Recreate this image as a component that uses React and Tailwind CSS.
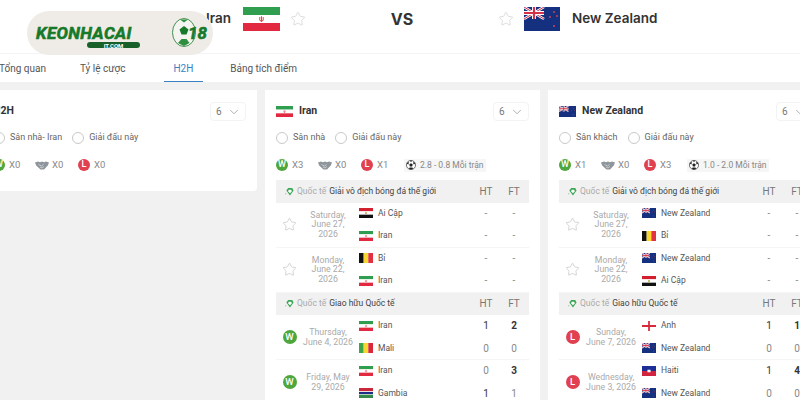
import { ChevronDown, Star } from 'lucide-react';

function IranFlag({ className }) {
  return (
    <svg viewBox="0 0 37 24" preserveAspectRatio="none" className={className}>
      <rect width="37" height="8" fill="#2f9e4f" />
      <rect y="8" width="37" height="8" fill="#fff" />
      <rect y="16" width="37" height="8" fill="#e2293f" />
      <path d="M18.5 9.2v5.6M16.8 10v3.4q1.7 1.6 3.4 0V10" fill="none" stroke="#d33" strokeWidth="0.9" />
    </svg>
  );
}

function NzFlag({ className }) {
  return (
    <svg viewBox="0 0 36 24" preserveAspectRatio="none" className={className}>
      <rect width="36" height="24" fill="#14307f" />
      <path d="M0 0L20 12M20 0L0 12" stroke="#fff" strokeWidth="2.6" />
      <path d="M0 0L20 12M20 0L0 12" stroke="#d3324a" strokeWidth="1" />
      <path d="M10 0v12M0 6h20" stroke="#fff" strokeWidth="4" />
      <path d="M10 0v12M0 6h20" stroke="#d3324a" strokeWidth="2.2" />
      <circle cx="30" cy="5" r="1" fill="#c9405a" />
      <circle cx="26" cy="10" r="1" fill="#c9405a" />
      <circle cx="33" cy="9" r="1" fill="#c9405a" />
      <circle cx="30" cy="19" r="1.1" fill="#c9405a" />
    </svg>
  );
}

function EgyptFlag({ className }) {
  return (
    <svg viewBox="0 0 36 24" preserveAspectRatio="none" className={className}>
      <rect width="36" height="8" fill="#d3202f" />
      <rect y="8" width="36" height="8" fill="#fff" />
      <rect y="16" width="36" height="8" fill="#111" />
      <rect x="16" y="10" width="4" height="4" fill="#b8962e" />
    </svg>
  );
}

function BelgiumFlag({ className }) {
  return (
    <svg viewBox="0 0 36 24" preserveAspectRatio="none" className={className}>
      <rect width="12" height="24" fill="#111" />
      <rect x="12" width="12" height="24" fill="#f7d730" />
      <rect x="24" width="12" height="24" fill="#e2323f" />
    </svg>
  );
}

function MaliFlag({ className }) {
  return (
    <svg viewBox="0 0 36 24" preserveAspectRatio="none" className={className}>
      <rect width="12" height="24" fill="#3fa648" />
      <rect x="12" width="12" height="24" fill="#f7d730" />
      <rect x="24" width="12" height="24" fill="#d8283a" />
    </svg>
  );
}

function GambiaFlag({ className }) {
  return (
    <svg viewBox="0 0 36 24" preserveAspectRatio="none" className={className}>
      <rect width="36" height="8" fill="#c8283a" />
      <rect y="8" width="36" height="8" fill="#fff" />
      <rect y="9.5" width="36" height="5" fill="#1c2f86" />
      <rect y="16" width="36" height="8" fill="#35894a" />
    </svg>
  );
}

function EnglandFlag({ className }) {
  return (
    <svg viewBox="0 0 36 24" preserveAspectRatio="none" className={className}>
      <rect width="36" height="24" fill="#fff" />
      <path d="M18 0v24M0 12h36" stroke="#d8283a" strokeWidth="4.5" />
    </svg>
  );
}

function HaitiFlag({ className }) {
  return (
    <svg viewBox="0 0 36 24" preserveAspectRatio="none" className={className}>
      <rect width="36" height="12" fill="#1c2f96" />
      <rect y="12" width="36" height="12" fill="#d2233f" />
      <rect x="14" y="9" width="8" height="6" fill="#fff" />
    </svg>
  );
}

const FLAGS = {
  iran: IranFlag,
  nz: NzFlag,
  egypt: EgyptFlag,
  belgium: BelgiumFlag,
  mali: MaliFlag,
  gambia: GambiaFlag,
  england: EnglandFlag,
  haiti: HaitiFlag,
};

function Ball({ className }) {
  return (
    <svg viewBox="0 0 24 24" className={className}>
      <circle cx="12" cy="12" r="11" fill="#fff" stroke="#222" strokeWidth="1.5" />
      <path d="M12 7.5l4.2 3-1.6 5H9.4l-1.6-5z" fill="#222" />
      <path d="M9 1.500h6L12 4.500zM22 9l-3.500 1.500-1.500-4 2-2.500zM2 9l3.500 1.500 1.500-4-2-2.500zM7 21l1.500-3h7L17 21l-5 1.500z" fill="#222" />
    </svg>
  );
}

function Handshake() {
  return (
    <svg viewBox="0 0 14 9" className="h-[9px] w-[14px]">
      <path d="M0 1.5l3-1 2 .8L7 .5l2 .8 2-.8 3 1-1.2 3L9 8.5H5.5L1.2 4.5z" fill="#8f959c" />
      <path d="M3.5 3.5l3 1.5 2-1.5M5 6l2 1 2-1.5" fill="none" stroke="#dfe1e3" strokeWidth="0.7" />
    </svg>
  );
}

function LeagueIcon() {
  return (
    <svg viewBox="0 0 10 10" className="h-[9px] w-[9px] shrink-0">
      <path d="M1.500 4l2-3h4.500l1.500 3L5.500 9.500z" fill="#3aa655" />
      <path d="M4 3h3l.5 2-2 2-2-2z" fill="#fff" />
      <circle cx="0.800" cy="7.500" r="0.700" fill="#9ccf9f" />
    </svg>
  );
}

function ResultBadge({ result, size }) {
  const color = result === 'W' ? 'bg-[#4ea73c]' : 'bg-[#e0404f]';
  const dims = size === 'lg' ? 'h-[14px] w-[14px] text-[9.500px]' : 'h-3 w-3 text-[9px]';
  return (
    <span className={`flex shrink-0 items-center justify-center rounded-full font-medium text-white ${color} ${dims}`}>
      {result}
    </span>
  );
}

function Radio({ label }) {
  return (
    <div className="flex items-center gap-[5px]">
      <span className="h-3 w-3 rounded-full border border-[#c9c9c9] bg-white" />
      <span className="text-[9px] text-[#666]">{label}</span>
    </div>
  );
}

function Stats({ wins, draws, losses, goals }) {
  return (
    <div className="mt-[14px] flex h-[12px] items-center text-[9.500px] text-[#888]">
      <ResultBadge result="W" />
      <span className="ml-1 w-[26px]">{wins}</span>
      <Handshake />
      <span className="ml-[3px] w-[26px]">{draws}</span>
      <ResultBadge result="L" />
      <span className="ml-1 w-[27px]">{losses}</span>
      {goals && (
        <div className="flex h-[13px] w-[82px] items-center gap-[4px] bg-[#f6f6f6] pl-[2px] text-[8.500px]">
          <Ball className="h-[10px] w-[10px] shrink-0" />
          <span className="whitespace-nowrap">{goals}</span>
        </div>
      )}
    </div>
  );
}

function PanelHead({ flag, title, radios }) {
  const Flag = FLAGS[flag];
  return (
    <>
      <div className="flex h-[19px] items-center justify-between">
        <div className="flex items-center gap-[6px]">
          {Flag && <Flag className="h-[11px] w-[17px]" />}
          <span className="-mt-px text-[10.500px] font-bold text-[#333]">{title}</span>
        </div>
        <div className="flex h-[19px] w-[36px] items-center justify-between rounded-sm border border-[#f3f3f3] pr-[4px] pl-[5px] text-[10px] text-[#777]">
          6
          <ChevronDown size={14} strokeWidth={1} className="text-[#777]" />
        </div>
      </div>
      <div className="mt-[10px] flex h-[14px] items-center gap-[10px]">
        {radios.map((r) => (
          <Radio key={r} label={r} />
        ))}
      </div>
    </>
  );
}

function TableHead({ league }) {
  return (
    <div className="flex h-[22.500px] items-center bg-[#f1f1f1] text-[8.500px]">
      <div className="ml-[9px] flex w-[187px] items-center gap-[3px] whitespace-nowrap">
        <LeagueIcon />
        <span className="text-[#aaa]">Quốc tế</span>
        <span className="text-[#444]">{league}</span>
      </div>
      <span className="w-[28px] text-center text-[10px] text-[#777]">HT</span>
      <span className="w-[28px] text-center text-[10px] text-[#777]">FT</span>
    </div>
  );
}

function Score({ value, strong, bold }) {
  const tone = bold ? 'font-bold text-[#333]' : strong ? 'text-[#333]' : 'text-[#888]';
  return <span className={`w-[28px] text-center text-[10px] ${tone}`}>{value}</span>;
}

function TeamLine({ team }) {
  const Flag = FLAGS[team.flag];
  return (
    <div className="flex h-[22.500px] items-center">
      <div className="flex w-[113px] items-center gap-[5px] whitespace-nowrap">
        <Flag className="h-[10px] w-[14px] shrink-0" />
        <span className="text-[8.500px] text-[#555]">{team.name}</span>
      </div>
      <Score value={team.ht} strong={team.htWin} />
      <Score value={team.ft} bold={team.ftWin} strong={team.ftWin} />
    </div>
  );
}

function MatchRow({ match }) {
  return (
    <div className="flex h-[45px] items-center border-b border-[#f5f5f5]">
      <div className="flex w-[27px] justify-center">
        {match.result ? (
          <ResultBadge result={match.result} size="lg" />
        ) : (
          <Star size={15} strokeWidth={1} className="text-[#bbb]" />
        )}
      </div>
      <div className="w-[50px] pt-px text-center text-[8.750px] leading-[9.500px] text-[#aaa]">
        {match.date.map((d) => (
          <div key={d} className="whitespace-nowrap">
            {d}
          </div>
        ))}
      </div>
      <div className="ml-[6px]">
        <TeamLine team={match.teams[0]} />
        <TeamLine team={match.teams[1]} />
      </div>
    </div>
  );
}

const t = (name, flag, ht = '-', ft = '-', htWin = false, ftWin = false) => ({ name, flag, ht, ft, htWin, ftWin });

const WORLD_CUP = 'Giải vô địch bóng đá thế giới';
const FRIENDLY = 'Giao hữu Quốc tế';

const IRAN_GROUPS = [
  {
    league: WORLD_CUP,
    matches: [
      { date: ['Saturday,', 'June 27,', '2026'], teams: [t('Ai Cập', 'egypt'), t('Iran', 'iran')] },
      { date: ['Monday,', 'June 22,', '2026'], teams: [t('Bỉ', 'belgium'), t('Iran', 'iran')] },
    ],
  },
  {
    league: FRIENDLY,
    matches: [
      { result: 'W', date: ['Thursday,', 'June 4, 2026'], teams: [t('Iran', 'iran', 1, 2, true, true), t('Mali', 'mali', 0, 0)] },
      { result: 'W', date: ['Friday, May', '29, 2026'], teams: [t('Iran', 'iran', 0, 3, false, true), t('Gambia', 'gambia', 1, 1, true)] },
    ],
  },
];

const NZ_GROUPS = [
  {
    league: WORLD_CUP,
    matches: [
      { date: ['Saturday,', 'June 27,', '2026'], teams: [t('New Zealand', 'nz'), t('Bỉ', 'belgium')] },
      { date: ['Monday,', 'June 22,', '2026'], teams: [t('New Zealand', 'nz'), t('Ai Cập', 'egypt')] },
    ],
  },
  {
    league: FRIENDLY,
    matches: [
      { result: 'L', date: ['Sunday,', 'June 7, 2026'], teams: [t('Anh', 'england', 1, 1, true, true), t('New Zealand', 'nz', 0, 0)] },
      { result: 'L', date: ['Wednesday,', 'June 3, 2026'], teams: [t('Haiti', 'haiti', 1, 4, true, true), t('New Zealand', 'nz', 0, 0)] },
    ],
  },
];

function TeamPanel({ flag, title, radios, stats, groups }) {
  return (
    <div className="w-[275px] shrink-0 bg-white px-[11px] pt-[12px] pb-4">
      <PanelHead flag={flag} title={title} radios={radios} />
      <Stats {...stats} />
      <div className="mt-[9px]">
        {groups.map((g) => (
          <div key={g.league}>
            <TableHead league={g.league} />
            {g.matches.map((m, i) => (
              <MatchRow key={i} match={m} />
            ))}
          </div>
        ))}
      </div>
    </div>
  );
}

function Logo() {
  return (
    <div className="absolute top-[11px] left-[27px] h-[44px] w-[186px] rounded-[22px] bg-[#efece7]">
      <div className="absolute top-[12px] left-[9px] text-[17px] leading-[20px] font-bold tracking-[0.4px] whitespace-nowrap text-[#17792a] italic [-webkit-text-stroke:0.6px_#17792a]">
        KEONHACAI
      </div>
      <svg viewBox="0 0 24 29" className="absolute top-[7px] left-[145px] h-[29px] w-[24px]">
        <ellipse cx="12" cy="14.500" rx="11.500" ry="14" fill="#f4f4f0" stroke="#17792a" strokeWidth="0.8" />
        <path d="M12 8l4.500 3.500-2 5h-5l-2-5z" fill="#17792a" />
        <path d="M8 1.500h8L12 4.500zM6 25l3.500-4h5l3 4-5.500 3z" fill="#2f8f3f" />
      </svg>
      <div className="absolute top-[12px] left-[161px] text-[17px] leading-[20px] font-bold whitespace-nowrap text-[#17792a] italic [-webkit-text-stroke:0.6px_#17792a]">
        18
      </div>
      <div className="absolute top-[31px] left-[60px] flex h-[6px] w-[53px] items-center justify-center rounded-sm bg-[#17602a] text-[6px] font-bold text-white">
        IT.COM
      </div>
    </div>
  );
}

const TABS = [
  { label: 'Tổng quan', cls: '-ml-px mr-[34px]' },
  { label: 'Tỷ lệ cược', cls: 'mr-[48px]' },
  { label: 'H2H', cls: 'relative mr-[37px] text-[#3b82c4]', active: true },
  { label: 'Bảng tích điểm', cls: '' },
];

export default function App() {
  return (
    <div className="relative h-[400px] w-[800px] overflow-hidden bg-[#f1f1f1] font-['Roboto',Arial,sans-serif]">
      <header className="flex h-[54px] items-center border-b border-[#f4f4f4] bg-white pb-[16px] font-['Inter',sans-serif] text-[#333]">
        <div className="flex w-[306px] items-center justify-end">
          <span className="text-[13.500px] font-semibold">Iran</span>
          <IranFlag className="ml-3 h-[24px] w-[37px]" />
          <Star size={16} strokeWidth={1} className="ml-[10px] text-[#ccc]" />
        </div>
        <div className="w-[192px] text-center text-[16px] font-bold">VS</div>
        <div className="flex items-center">
          <Star size={16} strokeWidth={1} className="text-[#ccc]" />
          <NzFlag className="ml-[10px] h-[24px] w-[36px]" />
          <span className="ml-3 text-[13.500px] font-semibold">New Zealand</span>
        </div>
      </header>

      <nav className="flex h-[28px] items-start bg-white pt-[7px] text-[10px] text-[#555]">
        {TABS.map((tab) => (
          <div key={tab.label} className={tab.cls}>
            {tab.label}
            {tab.active && <div className="absolute -right-[10px] -bottom-[6px] -left-[9px] h-px bg-[#3b82c4]" />}
          </div>
        ))}
      </nav>

      <main className="-ml-[18px] flex items-start gap-2 pt-2">
        <div className="w-[275px] shrink-0 rounded-b-sm bg-white px-[11px] pt-[12px] pb-[20px]">
          <PanelHead title="H2H" radios={['Sân nhà- Iran', 'Giải đấu này']} />
          <Stats wins="X0" draws="X0" losses="X0" />
        </div>
        <TeamPanel
          flag="iran"
          title="Iran"
          radios={['Sân nhà', 'Giải đấu này']}
          stats={{ wins: 'X3', draws: 'X0', losses: 'X1', goals: '2.8 - 0.8 Mỗi trận' }}
          groups={IRAN_GROUPS}
        />
        <TeamPanel
          flag="nz"
          title="New Zealand"
          radios={['Sân khách', 'Giải đấu này']}
          stats={{ wins: 'X1', draws: 'X0', losses: 'X3', goals: '1.0 - 2.0 Mỗi trận' }}
          groups={NZ_GROUPS}
        />
      </main>

      <Logo />
    </div>
  );
}
